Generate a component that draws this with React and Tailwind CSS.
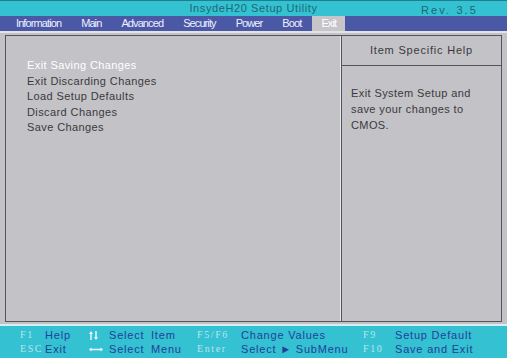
// InsydeH20 BIOS setup — Exit tab
const MENU = ['Information', 'Main', 'Advanced', 'Security', 'Power', 'Boot', 'Exit'];
const ITEMS = ['Exit Saving Changes', 'Exit Discarding Changes', 'Load Setup Defaults', 'Discard Changes', 'Save Changes'];

const font = { fontFamily: '"Liberation Sans", Arial, sans-serif' };

export default function App() {
  return (
    <div className="flex h-[358px] w-[507px] flex-col overflow-hidden bg-[#c3c2c7]" style={font}>
      {/* title bar */}
      <div className="relative flex h-[16px] items-center justify-center border-t border-[#1f7f8c] bg-[#34c1d1] text-[11px] tracking-[0.6px] text-[#1d6874]">
        <span>InsydeH20 Setup Utility</span>
        <span className="absolute right-[29px] top-[1px] tracking-[2.1px]">Rev. 3.5</span>
      </div>

      {/* menu bar */}
      <div className="flex h-[15px] items-stretch bg-[#4a58a6] pl-[10px] text-[11px] tracking-[-0.9px] text-[#eef0ff]">
        {MENU.map((m) => (
          <div
            key={m}
            className={
              m === 'Exit'
                ? 'flex items-center bg-[#c6c5ca] px-[9px] text-white -ml-[3px]'
                : 'flex items-center px-[6px] mr-[8px]'
            }
          >
            {m}
          </div>
        ))}
      </div>

      {/* body */}
      <div className="flex flex-1 flex-col border-t-2 border-[#e3e3e6] px-[5px] pt-[2px] pb-[2px]">
        <div className="flex flex-1 border border-[#555559]">
          <div className="w-[335px] border-r border-[#e6e6e8] pl-[21px] pt-[22px] text-[11px] leading-[15.5px] tracking-[0.4px] text-[#3a3a3c]">
            {ITEMS.map((it, i) => (
              <div key={it} className={i === 0 ? 'text-white' : ''}>
                {it}
              </div>
            ))}
          </div>
          <div className="flex flex-1 flex-col border-l border-[#555559]">
            <div className="flex h-[30px] items-center justify-center border-b border-[#555559] text-[11px] tracking-[0.8px] text-[#3a3a3c]">
              Item Specific Help
            </div>
            <div className="pl-[9px] pt-[19px] text-[11px] leading-[16px] tracking-[0.4px] text-[#3a3a3c]">
              <div>Exit System Setup and</div>
              <div>save your changes to</div>
              <div>CMOS.</div>
            </div>
          </div>
        </div>
      </div>

      {/* footer */}
      <div className="flex h-[34px] flex-col justify-center border-t-2 border-[#d8eef2] bg-[#34c1d1] pb-[1px] text-[11px] leading-[14px] tracking-[0.8px] text-[#23409a]">
        <FooterRow k1="F1" d1="Help" arrow={<UpDown />} s2="Item" k3="F5/F6" d3="Change Values" k4="F9" d4="Setup Default" />
        <FooterRow k1="ESC" d1="Exit" arrow={<LeftRight />} s2="Menu" k3="Enter" d3="Select ► SubMenu" k4="F10" d4="Save and Exit" />
      </div>
    </div>
  );
}

function UpDown() {
  return (
    <svg width="10" height="9" viewBox="0 0 10 9" className="mt-[3px]" fill="#eef9ff">
      <path d="M2 0 L4 3 L2.7 3 L2.7 9 L1.3 9 L1.3 3 L0 3 Z" />
      <path d="M7 9 L5 6 L6.3 6 L6.3 0 L7.7 0 L7.7 6 L9 6 Z" />
    </svg>
  );
}

function LeftRight() {
  return (
    <svg width="14" height="5" viewBox="0 0 14 5" className="mt-[5px]" fill="#eef9ff">
      <path d="M0 2.5 L2.5 0.5 L2.5 1.7 L11.5 1.7 L11.5 0.5 L14 2.5 L11.5 4.5 L11.5 3.3 L2.5 3.3 L2.5 4.5 Z" />
    </svg>
  );
}

function FooterRow({ k1, d1, arrow, s2, k3, d3, k4, d4 }) {
  const key = 'text-[#b9e6ee] text-[10px] tracking-[1.6px]';
  const keyFont = { fontFamily: '"Liberation Serif", "Times New Roman", serif' };
  return (
    <div className="flex pl-[20px] whitespace-nowrap">
      <span className={`w-[25px] ${key}`} style={keyFont}>{k1}</span>
      <span className="w-[44px]">{d1}</span>
      <span className="w-[20px]">{arrow}</span>
      <span className="w-[42px]">Select</span>
      <span className="w-[46px]">{s2}</span>
      <span className={`w-[44px] ${key}`} style={keyFont}>{k3}</span>
      <span className="w-[122px]">{d3}</span>
      <span className={`w-[32px] ${key}`} style={keyFont}>{k4}</span>
      <span>{d4}</span>
    </div>
  );
}
